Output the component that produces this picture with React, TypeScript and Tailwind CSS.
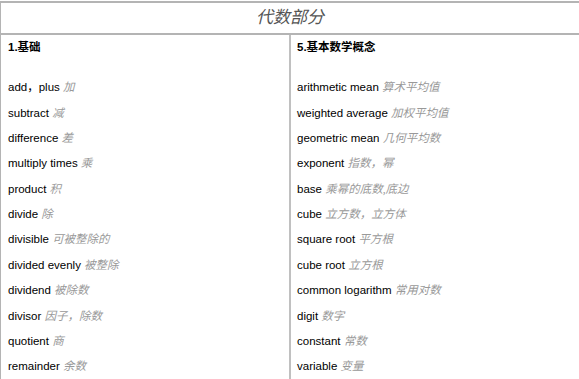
import React from "react";

const left: [string, string][] = [
  ["add，plus", "加"],
  ["subtract", "减"],
  ["difference", "差"],
  ["multiply times", "乘"],
  ["product", "积"],
  ["divide", "除"],
  ["divisible", "可被整除的"],
  ["divided evenly", "被整除"],
  ["dividend", "被除数"],
  ["divisor", "因子，除数"],
  ["quotient", "商"],
  ["remainder", "余数"],
];

const right: [string, string][] = [
  ["arithmetic mean", "算术平均值"],
  ["weighted average", "加权平均值"],
  ["geometric mean", "几何平均数"],
  ["exponent", "指数，幂"],
  ["base", "乘幂的底数,底边"],
  ["cube", "立方数，立方体"],
  ["square root", "平方根"],
  ["cube root", "立方根"],
  ["common logarithm", "常用对数"],
  ["digit", "数字"],
  ["constant", "常数"],
  ["variable", "变量"],
];

function Column({ title, items }: { title: string; items: [string, string][] }) {
  return (
    <div className="flex flex-col">
      <div className="mt-[6px] h-[12px] leading-[12px] text-[11.5px] font-bold text-black">{title}</div>
      <div className="mt-[22.3px] flex flex-col">
        {items.map(([en, zh], i) => (
          <div key={i} className="h-[25.36px] leading-[25.36px] text-[11.5px] text-black whitespace-nowrap">
            {en}{" "}
            <span className="italic text-[#999] text-[11.5px]" style={{ fontFamily: '"Liberation Serif", "Noto Sans CJK SC", serif' }}>
              {zh}
            </span>
          </div>
        ))}
      </div>
    </div>
  );
}

export default function App() {
  return (
    <div
      className="w-[579px] h-[379px] overflow-hidden bg-white pt-px"
      style={{ fontFamily: '"Liberation Sans", "Noto Sans CJK SC", sans-serif' }}
    >
      <div className="border-t-2 border-l border-[#b4b4b4] h-[400px] flex flex-col">
        <div className="h-[32px] border-b-2 border-[#b4b4b4] flex items-center justify-center">
          <span
            className="italic text-[17px] text-[#555]"
            style={{ fontFamily: '"Liberation Serif", "Noto Sans CJK SC", serif' }}
          >
            代数部分
          </span>
        </div>
        <div className="flex flex-1">
          <div className="w-[290px] border-r-2 border-[#c0c0c0] pl-[7px]">
            <Column title="1.基础" items={left} />
          </div>
          <div className="flex-1 pl-[6px]">
            <Column title="5.基本数学概念" items={right} />
          </div>
        </div>
      </div>
    </div>
  );
}
